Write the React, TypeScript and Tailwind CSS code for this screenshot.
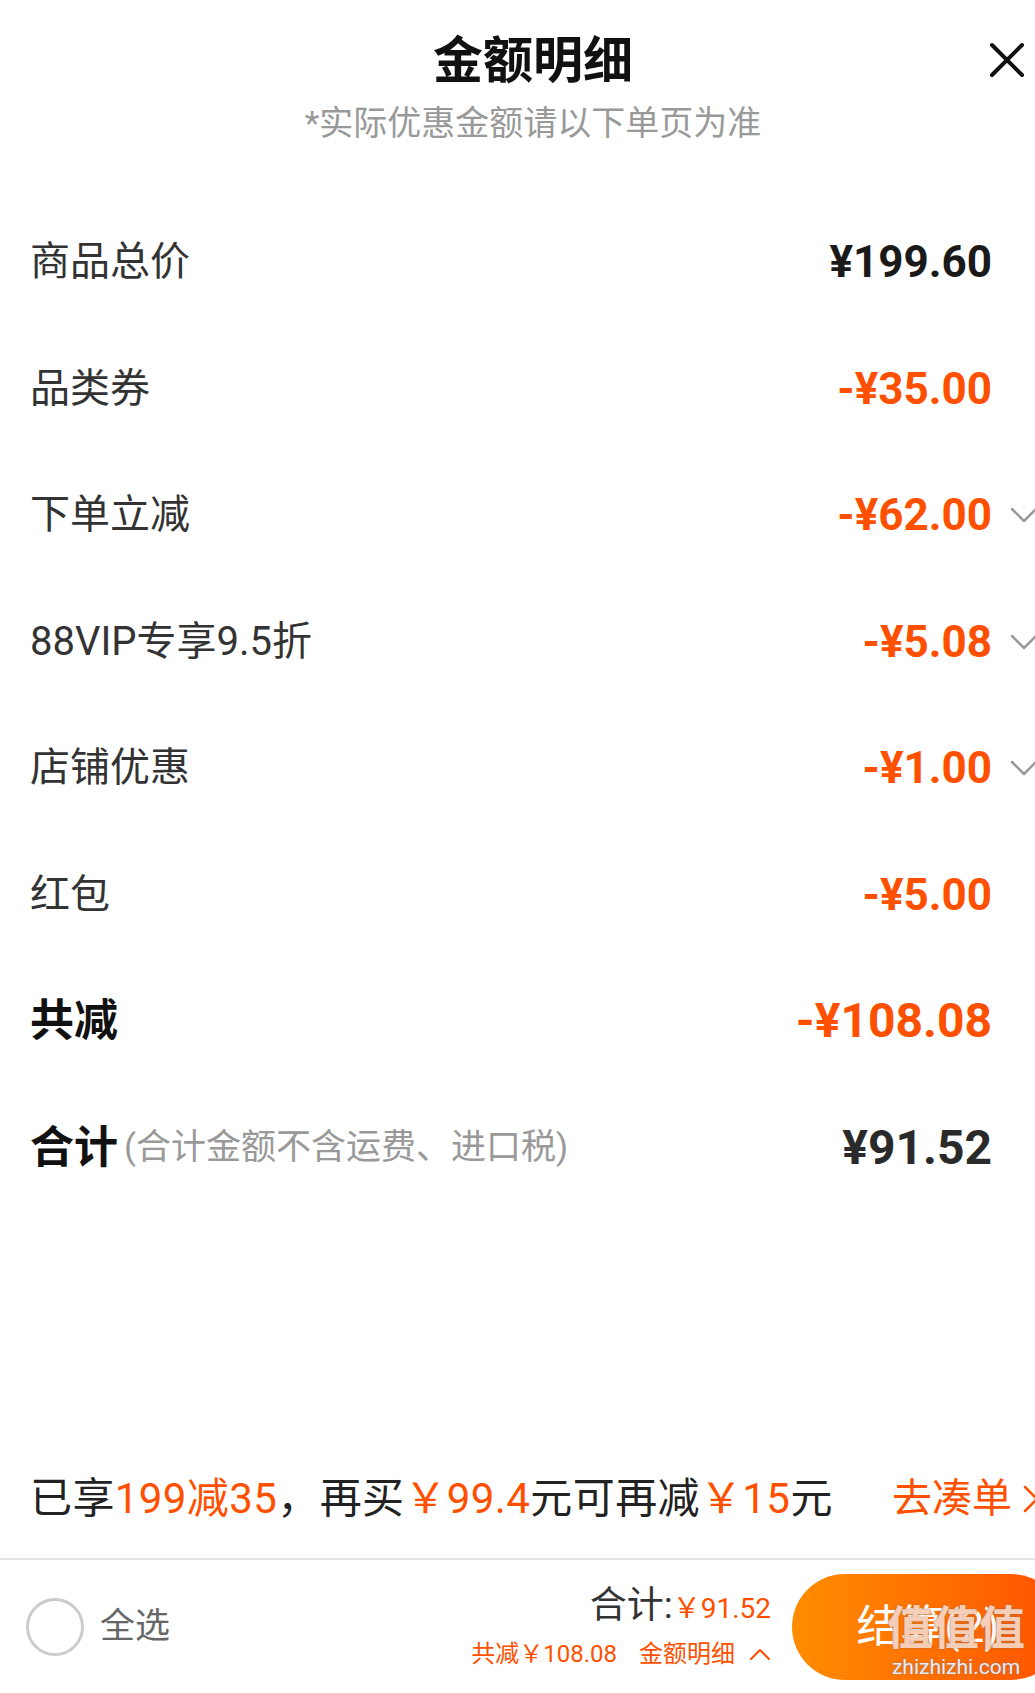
import React from 'react';

interface DetailRow {
  label: string;
  amount: string;
  discount?: boolean;
  expandable?: boolean;
}

const rows: DetailRow[] = [
  { label: '商品总价', amount: '¥199.60' },
  { label: '品类券', amount: '-¥35.00', discount: true },
  { label: '下单立减', amount: '-¥62.00', discount: true, expandable: true },
  { label: '88VIP专享9.5折', amount: '-¥5.08', discount: true, expandable: true },
  { label: '店铺优惠', amount: '-¥1.00', discount: true, expandable: true },
  { label: '红包', amount: '-¥5.00', discount: true },
];

const ChevronDown = () => (
  <svg width="28" height="16" viewBox="0 0 28 16" fill="none">
    <polyline points="2,2 14,14 26,2" stroke="#9a9a9a" strokeWidth="2.5" strokeLinecap="round" strokeLinejoin="round" />
  </svg>
);

const Row = ({ label, amount, discount, expandable }: DetailRow) => (
  <div className="h-[126.5px] flex items-center">
    <span className="text-[40px] text-[#333] leading-none">{label}</span>
    <div className="flex-1" />
    <span className={`text-[44px] font-bold leading-none ${discount ? 'text-[#ff5000]' : 'text-[#1a1a1a]'}`}>{amount}</span>
    <div className="w-[46px] flex justify-end">{expandable && <ChevronDown />}</div>
  </div>
);

const App = () => {
  return (
    <div className="w-[1035px] h-[1693px] overflow-hidden bg-white" style={{ fontFamily: 'Roboto, "Noto Sans CJK SC", sans-serif' }}>
      <div className="w-[1066px] h-full flex flex-col">
        {/* header */}
        <div className="relative pt-[36px] flex flex-col items-center">
          <h1 className="text-[50px] leading-[50px] font-bold text-[#111]">金额明细</h1>
          <p className="mt-[20px] text-[34px] leading-[34px] text-[#999]">*实际优惠金额请以下单页为准</p>
          <button className="absolute top-[42px] right-[41px] w-[36px] h-[36px]">
            <svg width="36" height="36" viewBox="0 0 36 36" fill="none">
              <path d="M3 3L33 33M33 3L3 33" stroke="#111" strokeWidth="4" strokeLinecap="round" />
            </svg>
          </button>
        </div>

        {/* rows */}
        <div className="mt-[59px] pl-[30px] pr-[28px]">
          {rows.map((r) => (
            <Row key={r.label} {...r} />
          ))}
          <div className="h-[126.5px] flex items-center">
            <span className="text-[44px] font-bold text-[#111] leading-none">共减</span>
            <div className="flex-1" />
            <span className="text-[48px] font-bold text-[#ff5000] leading-none">-¥108.08</span>
            <div className="w-[46px]" />
          </div>
          <div className="h-[126.5px] flex items-center">
            <span className="text-[44px] font-bold text-[#111] leading-none">合计</span>
            <span className="ml-[6px] text-[35px] text-[#999] leading-none">(合计金额不含运费、进口税)</span>
            <div className="flex-1" />
            <span className="text-[48px] font-bold text-[#2a2a2a] leading-none">¥91.52</span>
            <div className="w-[46px]" />
          </div>
        </div>

        <div className="flex-1" />

        {/* promo line */}
        <div className="h-[118px] flex items-center pl-[30px] pr-[26px] text-[42px] tracking-[0.4px] leading-none">
          <span className="text-[#222]">
            已享<span className="text-[#ff5000]">199减35</span>，再买<span className="text-[#ff5000]">￥99.4</span>元可再减<span className="text-[#ff5000]">￥15</span>元
          </span>
          <div className="flex-1" />
          <span className="text-[#ff5000] text-[40px] tracking-normal">去凑单</span>
          <svg className="ml-[10px]" width="18" height="30" viewBox="0 0 18 30" fill="none">
            <polyline points="3,3 15,15 3,27" stroke="#ff5000" strokeWidth="2.5" strokeLinecap="round" strokeLinejoin="round" />
          </svg>
        </div>

        {/* bottom bar */}
        <div className="h-[135px] border-t-2 border-[#e6e6e6] flex items-center">
          <div className="pl-[26px] flex items-center">
            <div className="w-[58px] h-[58px] rounded-full border-[3px] border-[#cccccc]" />
            <span className="ml-[16px] text-[35px] text-[#666] leading-none">全选</span>
          </div>
          <div className="flex-1" />
          <div className="flex flex-col items-end">
            <div className="flex items-baseline leading-none">
              <span className="text-[37px] text-[#333]">合计:</span>
              <span className="text-[28px] text-[#ff5000]">￥91.52</span>
            </div>
            <div className="mt-[18px] flex items-center text-[24px] text-[#ff5000] leading-none">
              <span>共减￥108.08</span>
              <span className="ml-[22px]">金额明细</span>
              <svg className="ml-[14px]" width="22" height="14" viewBox="0 0 22 14" fill="none">
                <polyline points="2,12 11,3 20,12" stroke="#ff5000" strokeWidth="2" strokeLinecap="round" strokeLinejoin="round" />
              </svg>
            </div>
          </div>
          <div className="relative ml-[21px] mr-[2px] w-[272px] h-[106px] rounded-full bg-gradient-to-r from-[#ff8c00] to-[#ff5000] flex items-center justify-center">
            <span className="text-[44px] text-white leading-none">结算(2)</span>
            {/* site watermark over the button */}
            <div className="absolute left-[94px] top-[31px] w-[140px] flex flex-col items-center pointer-events-none">
              <span className="text-[46px] font-bold leading-none text-[#f6cdb6] [text-shadow:0_0_2px_#8a6a5a]">值值值</span>
              <span className="mt-[6px] text-[21px] leading-none text-[#ececf2] [text-shadow:0_0_2px_#7a7a90]">zhizhizhi.com</span>
            </div>
          </div>
        </div>
      </div>
    </div>
  );
};

export default App;
